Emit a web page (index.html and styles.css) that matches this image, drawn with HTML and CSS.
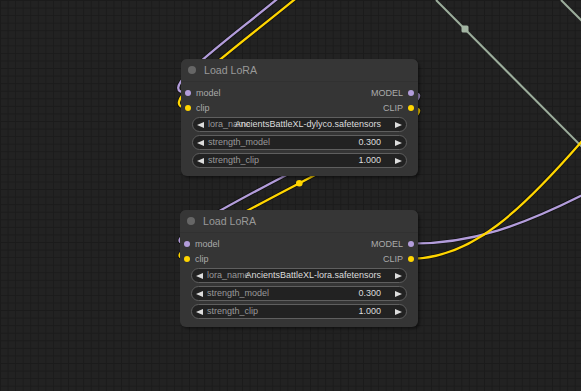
FILE: index.html
```html
<html>
    <head>
        <link rel="stylesheet" href="styles.css">
        <title>Load LoRA</title>
    </head>
    <body>
        <div class="graph">

            <svg class="links" width="581" height="391" viewBox="0 0 581 391">
                <g class="link-shadow">
                    <path d="M 300,-20 C 230,40 150,92.7 188,92.7"/>
                    <path d="M 318,-20 C 248,40 148,107.7 188,107.7"/>
                    <path d="M 410.7,92.7 C 477.7,92.7 121,243.7 188,243.7"/>
                    <path d="M 410.7,107.7 C 477.7,107.7 121,258.7 188,258.7"/>
                    <path d="M 410.7,243.7 C 470,243.7 520,228 600,186"/>
                    <path d="M 410.7,258.7 C 470,258.7 520,215 600,120"/>
                </g>
                <path class="link link-grey" d="M 436,0 L 592,157"/>
                <path class="link link-grey" d="M 561,0 L 584,23"/>
                <rect class="reroute" x="461.5" y="25.5" width="7" height="7" rx="1.5"/>
                <path class="link link-model" d="M 300,-20 C 230,40 150,92.7 188,92.7"/>
                <path class="link link-clip" d="M 318,-20 C 248,40 148,107.7 188,107.7"/>
                <path class="link link-model" d="M 410.7,92.7 C 477.7,92.7 121,243.7 188,243.7"/>
                <path class="link link-clip" d="M 410.7,107.7 C 477.7,107.7 121,258.7 188,258.7"/>
                <circle class="link-center" cx="299.3" cy="183.2" r="3.3"/>
                <path class="link link-model" d="M 410.7,243.7 C 470,243.7 520,228 600,186"/>
                <path class="link link-clip" d="M 410.7,258.7 C 470,258.7 520,215 600,120"/>
            </svg>

            <div class="node node-a">
                <div class="node-title"><span class="title-dot"></span>Load LoRA</div>
                <div class="slots">
                    <div class="slot-row">
                        <span class="slot"><i class="dot dot-model"></i>model</span>
                        <span class="slot">MODEL<i class="dot dot-model"></i></span>
                    </div>
                    <div class="slot-row">
                        <span class="slot"><i class="dot dot-clip"></i>clip</span>
                        <span class="slot">CLIP<i class="dot dot-clip"></i></span>
                    </div>
                </div>
                <div class="widgets">
                    <div class="widget">
                        <span class="arrow-left"></span>
                        <span class="w-label">lora_name</span>
                        <span class="w-value">AncientsBattleXL-dylyco.safetensors</span>
                        <span class="arrow-right"></span>
                    </div>
                    <div class="widget">
                        <span class="arrow-left"></span>
                        <span class="w-label">strength_model</span>
                        <span class="w-value">0.300</span>
                        <span class="arrow-right"></span>
                    </div>
                    <div class="widget">
                        <span class="arrow-left"></span>
                        <span class="w-label">strength_clip</span>
                        <span class="w-value">1.000</span>
                        <span class="arrow-right"></span>
                    </div>
                </div>
            </div>

            <div class="node node-b">
                <div class="node-title"><span class="title-dot"></span>Load LoRA</div>
                <div class="slots">
                    <div class="slot-row">
                        <span class="slot"><i class="dot dot-model"></i>model</span>
                        <span class="slot">MODEL<i class="dot dot-model"></i></span>
                    </div>
                    <div class="slot-row">
                        <span class="slot"><i class="dot dot-clip"></i>clip</span>
                        <span class="slot">CLIP<i class="dot dot-clip"></i></span>
                    </div>
                </div>
                <div class="widgets">
                    <div class="widget">
                        <span class="arrow-left"></span>
                        <span class="w-label">lora_name</span>
                        <span class="w-value">AncientsBattleXL-lora.safetensors</span>
                        <span class="arrow-right"></span>
                    </div>
                    <div class="widget">
                        <span class="arrow-left"></span>
                        <span class="w-label">strength_model</span>
                        <span class="w-value">0.300</span>
                        <span class="arrow-right"></span>
                    </div>
                    <div class="widget">
                        <span class="arrow-left"></span>
                        <span class="w-label">strength_clip</span>
                        <span class="w-value">1.000</span>
                        <span class="arrow-right"></span>
                    </div>
                </div>
            </div>

        </div>
    </body>
</html>
```

FILE: styles.css
```css
body {
    margin: 0;
    background-color: #222222;
    font-family: 'Liberation Sans', Arial, sans-serif;
}

.graph {
    position: relative;
    width: 581px;
    height: 391px;
    overflow: hidden;
    background-color: #222222;
    background-image:
        linear-gradient(#1b1b1b 1px, transparent 1px),
        linear-gradient(90deg, #1b1b1b 1px, transparent 1px);
    background-size: 7.57px 7.57px;
}

.links {
    position: absolute;
    left: 0;
    top: 0;
}

.link-shadow path {
    fill: none;
    stroke: #000000;
    stroke-opacity: 0.45;
    stroke-width: 4;
}

.link {
    fill: none;
    stroke-width: 2.3;
}

.link-model {
    stroke: #b39ddb;
}

.link-clip {
    stroke: #ffd500;
}

.link-grey {
    stroke: #9cae9c;
    stroke-width: 2;
}

.reroute {
    fill: #a3b5a3;
}

.link-center {
    fill: #ffd500;
}

.node {
    position: absolute;
    width: 237px;
    height: 117px;
    box-sizing: border-box;
    background-color: #353535;
    border-radius: 6px;
    box-shadow: 2px 2px 3px rgba(0, 0, 0, 0.45);
    overflow: hidden;
}

.node-a {
    left: 181px;
    top: 59px;
}

.node-b {
    left: 180px;
    top: 210px;
    width: 238px;
}

.node-title {
    height: 23px;
    display: flex;
    align-items: center;
    padding-left: 7px;
    background-color: #363636;
    border-bottom: 1px solid #313131;
    box-sizing: border-box;
    color: #999999;
    font-size: 10.6px;
}

.title-dot {
    width: 8px;
    height: 8px;
    border-radius: 50%;
    background-color: #666666;
    margin-right: 8px;
}

.slots {
    padding-top: 3px;
}

.slot-row {
    height: 15px;
    display: flex;
    justify-content: space-between;
    align-items: center;
    padding: 0 4px;
    color: #aaaaaa;
    font-size: 9px;
}

.slot {
    display: flex;
    align-items: center;
    gap: 5px;
}

.dot {
    width: 6px;
    height: 6px;
    border-radius: 50%;
}

.dot-model {
    background-color: #b39ddb;
}

.dot-clip {
    background-color: #ffd500;
}

.widgets {
    margin: 2px 11px 0 11px;
    display: flex;
    flex-direction: column;
    gap: 3px;
}

.widget {
    height: 15px;
    box-sizing: border-box;
    border: 1px solid #5f5f5f;
    border-radius: 8px;
    background-color: #222222;
    display: grid;
    grid-template-columns: 7px 1fr 7px;
    column-gap: 4px;
    align-items: center;
    padding: 0 4px;
    font-size: 9px;
    line-height: 13px;
}

.w-label {
    grid-column: 2;
    grid-row: 1;
    justify-self: start;
    color: #999999;
    white-space: nowrap;
}

.w-value {
    grid-column: 2;
    grid-row: 1;
    justify-self: end;
    padding-right: 10px;
    color: #dddddd;
    white-space: nowrap;
}

.arrow-left {
    grid-column: 1;
    grid-row: 1;
    width: 0;
    height: 0;
    border-top: 3.5px solid transparent;
    border-bottom: 3.5px solid transparent;
    border-right: 7px solid #dddddd;
}

.arrow-right {
    grid-column: 3;
    grid-row: 1;
    width: 0;
    height: 0;
    border-top: 3.5px solid transparent;
    border-bottom: 3.5px solid transparent;
    border-left: 7px solid #dddddd;
}
```
